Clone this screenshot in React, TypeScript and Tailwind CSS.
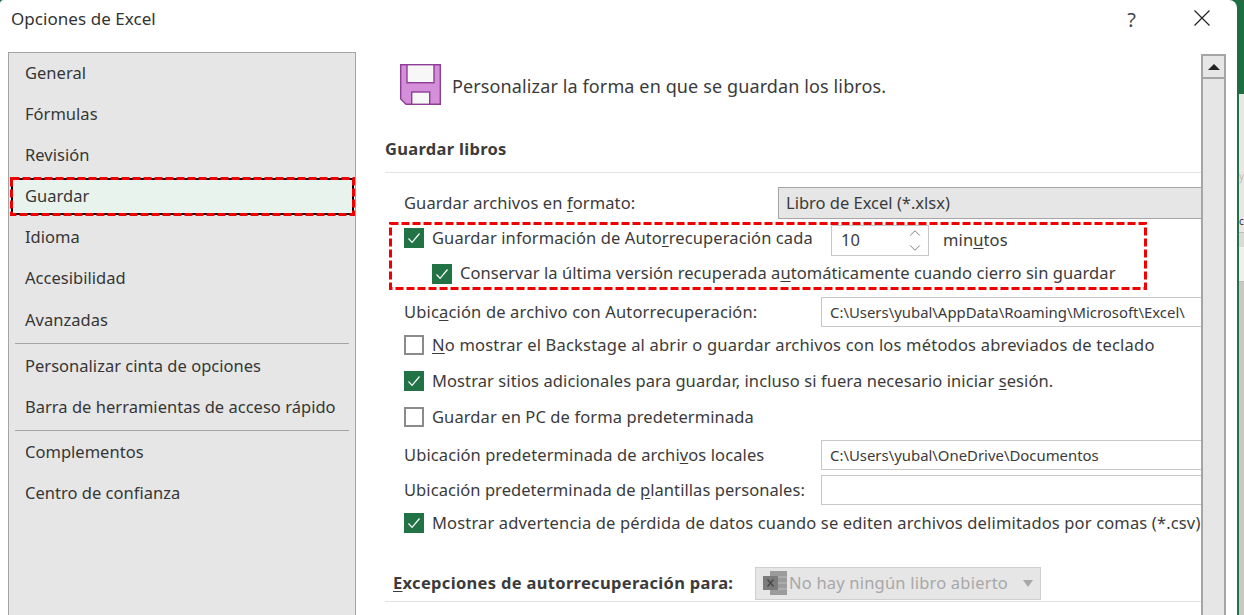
import { ChevronUp, ChevronDown } from "lucide-react";

const font = "font-['Noto_Sans','Open_Sans',sans-serif]";

const navTop = ["General", "Fórmulas", "Revisión"];
const navMid = ["Idioma", "Accesibilidad"];

function U({ children }: { children: string }) {
  return <span className="underline underline-offset-2">{children}</span>;
}

function Check({ on }: { on?: boolean }) {
  return (
    <span
      className={
        on
          ? "flex h-5 w-5 shrink-0 items-center justify-center bg-[#217346]"
          : "flex h-5 w-5 shrink-0 items-center justify-center border-2 border-[#8a8a8a] bg-white"
      }
    >
      {on && (
        <svg width="14" height="14" viewBox="0 0 14 14" fill="none" stroke="#fff" strokeWidth="1.2">
          <path d="M1.5 7.5l3.6 3.8L12.5 2.5" />
        </svg>
      )}
    </span>
  );
}

function NavItem({ label, tall }: { label: string; tall?: boolean }) {
  return (
    <div className={tall ? "flex h-[42px] items-center pl-4 text-[#363636]" : "flex h-[41px] items-center pl-4 text-[#363636]"}>
      {label}
    </div>
  );
}

// hand-drawn red dashed annotation that sits over the dialog
function DashedMark({ w, h, under }: { w: number; h: number; under?: boolean }) {
  return (
    <svg width={w} height={h} className="pointer-events-none absolute left-0 top-0" fill="none" strokeWidth="3">
      {under && <rect x="2" y="2" width={w - 4} height={h - 4} stroke="#000" strokeWidth="2" />}
      <rect x="1.5" y="1.5" width={w - 3} height={h - 3} stroke="#f00000" strokeDasharray="8 3" />
    </svg>
  );
}

function FloppyIcon() {
  return (
    <svg width="41" height="41" viewBox="0 0 41 41" className="shrink-0">
      <path d="M.7.7H40.3V40.3H6L.7 35Z" fill="#d48fd8" stroke="#8e3e96" strokeWidth="1.4" />
      <rect x="7" y=".7" width="27" height="18" fill="#f7f7f7" stroke="#8e3e96" strokeWidth="1.4" />
      <rect x="11.7" y="28" width="18" height="12.3" fill="#f7f7f7" stroke="#8e3e96" strokeWidth="1.4" />
    </svg>
  );
}

function ExcelGhost() {
  return (
    <svg width="26" height="26" viewBox="0 0 26 26" className="shrink-0">
      <rect x="7" y="0" width="17" height="24" fill="#9b9b9b" />
      <path d="M15 6h9M15 12h9M15 18h9" stroke="#bdbdbd" strokeWidth="1" />
      <rect x="0" y="5" width="15" height="14" fill="#7c7c7c" />
      <path d="M4.5 8.5l6 7M10.5 8.5l-6 7" stroke="#444" strokeWidth="1.2" />
    </svg>
  );
}

export default function App() {
  return (
    <div className={`${font} flex h-[615px] w-[1244px] overflow-hidden bg-[#1f6e43] text-[16.5px] leading-none tracking-[0.1px] text-[#3b3b3b]`}>
      <div className="h-full w-[1237px] shrink-0 rounded-tl-[4px] rounded-tr-[8px] bg-white">
        <div className="flex h-[52px] items-start justify-between pl-[11px] pr-[27px] pt-[10px]">
          <span className="text-[17px] tracking-[0.05px] text-[#333]">Opciones de Excel</span>
          <div className="flex items-start gap-[58px]">
            <span className="text-[20px] text-[#444]">?</span>
            <svg width="16" height="16" viewBox="0 0 16 16" fill="none" stroke="#222" strokeWidth="1.2">
              <path d="M.5.5l15 15M15.5.5l-15 15" />
            </svg>
          </div>
        </div>

        <div className="flex h-[563px]">
          <aside className="ml-2 w-[348px] shrink-0 border border-b-0 border-[#a5a5a5] bg-[#e6e6e6] tracking-[0.02px]">
            {navTop.map((n) => (
              <NavItem key={n} label={n} />
            ))}
            <div className="relative my-[1px] ml-[1px] flex h-[39px] items-center bg-[#e9f3ee] pl-[15px] text-[#363636]">
              Guardar
              <DashedMark w={345} h={39} under />
            </div>
            {navMid.map((n) => (
              <NavItem key={n} label={n} />
            ))}
            <NavItem label="Avanzadas" tall />
            <div className="mx-[6px] mt-[2px] border-t border-[#a5a5a5]" />
            <div className="mt-[1px]">
              <NavItem label="Personalizar cinta de opciones" tall />
              <NavItem label="Barra de herramientas de acceso rápido" />
            </div>
            <div className="mx-[6px] mt-[2px] border-t border-[#a5a5a5]" />
            <div className="mt-[1px]">
              <NavItem label="Complementos" />
              <NavItem label="Centro de confianza" />
            </div>
          </aside>

          <main className="ml-[29px] w-[816px] shrink-0 overflow-hidden">
            <div className="mt-[12px] flex h-[41px] items-center gap-[11px] pl-[15px]">
              <FloppyIcon />
              <span className="mt-[3px] text-[18px] tracking-[0.12px]">Personalizar la forma en que se guardan los libros.</span>
            </div>

            <div className="mt-[32px] flex h-[24px] items-center font-bold tracking-[0.3px]">Guardar libros</div>
            <div className="mt-[11px] border-t border-[#e3e3e3]" />

            <div className="mt-[14px] flex h-[32px] items-center pl-[19px]">
              <span className="w-[374px]">
                Guardar archivos en <U>f</U>ormato:
              </span>
              <div className="flex h-[32px] flex-1 items-center border border-r-0 border-[#a5a5a5] bg-[#e6e6e6] pl-[7px] tracking-normal">
                Libro de Excel (*.xlsx)
              </div>
            </div>

            <div className="relative mt-[3px] ml-[4px] h-[68px] w-[758px] pl-[15px] pt-[3px]">
              <div className="flex h-[31px] items-center">
                <div className="mb-[5px] flex items-center gap-2">
                  <Check on />
                  <span className="w-[399px]">
                    Guardar información de Auto<U>r</U>recuperación cada
                  </span>
                </div>
                <div className="flex h-[31px] w-[98px] items-center justify-between border border-[#c8c8c8] pl-[9px] pr-[4px]">
                  <span>10</span>
                  <span className="flex flex-col items-center -space-y-[3px] text-[#555]">
                    <ChevronUp className="h-[18px] w-[18px]" strokeWidth={1} />
                    <ChevronDown className="h-[18px] w-[18px]" strokeWidth={1} />
                  </span>
                </div>
                <span className="ml-[14px]">
                  min<U>u</U>tos
                </span>
              </div>
              <div className="mt-[2px] flex h-[31px] items-center gap-2 pl-[28px] tracking-[0.06px]">
                <Check on />
                <span>
                  Conservar la última versión recuperada a<U>u</U>tomáticamente cuando cierro sin guardar
                </span>
              </div>
              <DashedMark w={758} h={68} />
            </div>

            <div className="mt-[7px] flex h-[30px] items-center pl-[19px]">
              <span className="w-[417px] tracking-[0.16px]">
                Ubic<U>a</U>ción de archivo con Autorrecuperación:
              </span>
              <div className="flex h-[30px] flex-1 items-center border border-r-0 border-[#c8c8c8] pl-2 text-[14.9px] tracking-normal">
                C:\Users\yubal\AppData\Roaming\Microsoft\Excel\
              </div>
            </div>

            <div className="mt-[2px] flex h-[32px] items-center gap-2 pl-[19px] tracking-[0.2px]">
              <Check />
              <span>
                <U>N</U>o mostrar el Backstage al abrir o guardar archivos con los métodos abreviados de teclado
              </span>
            </div>
            <div className="mt-[4px] flex h-[32px] items-center gap-2 pl-[19px] tracking-[0.085px]">
              <Check on />
              <span>
                Mostrar sitios adicionales para guardar, incluso si fuera necesario iniciar <U>s</U>esión.
              </span>
            </div>
            <div className="mt-[4px] flex h-[32px] items-center gap-2 pl-[19px]">
              <Check />
              <span>Guardar en PC de forma predeterminada</span>
            </div>

            <div className="mt-[7px] flex h-[30px] items-center pl-[19px]">
              <span className="w-[417px]">
                Ubicación predeterminada de archi<U>v</U>os locales
              </span>
              <div className="flex h-[30px] flex-1 items-center border border-r-0 border-[#c8c8c8] pl-2 text-[14.9px] tracking-normal">
                C:\Users\yubal\OneDrive\Documentos
              </div>
            </div>
            <div className="mt-[5px] flex h-[30px] items-center pl-[19px]">
              <span className="w-[417px] tracking-[0.06px]">
                Ubicación predeterminada de <U>p</U>lantillas personales:
              </span>
              <div className="h-[30px] flex-1 border border-r-0 border-[#c8c8c8]" />
            </div>

            <div className="mt-[2px] flex h-[32px] items-center gap-2 pl-[19px] tracking-[0.15px]">
              <Check on />
              <span className="whitespace-nowrap">
                Mostrar advertencia de pérdida de datos cuando se editen archivos delimitados por comas (*.csv)
              </span>
            </div>

            <div className="mt-[28px] flex h-[33px] items-center pl-[8px]">
              <span className="w-[362px] font-bold tracking-[0.32px]">
                <U>E</U>xcepciones de autorrecuperación para:
              </span>
              <div className="flex h-[33px] w-[286px] items-center justify-between border border-[#cfcfcf] bg-[#e6e6e6] pl-[7px] pr-[7px] text-[#a8a8a8] tracking-[0.2px]">
                <span className="flex items-center">
                  <ExcelGhost />
                  No hay ningún libro abierto
                </span>
                <span className="h-0 w-0 border-x-[5px] border-t-[7px] border-x-transparent border-t-[#a8a8a8]" />
              </div>
            </div>
            <div className="mt-[1px] border-t border-[#e3e3e3]" />
          </main>

          <div className="mt-[2px] h-full w-[25px] shrink-0 border-x-2 border-t-2 border-[#a5a5a5] bg-[#e6e6e6]">
            <div className="flex h-[23px] items-center justify-center border-b-2 border-[#a5a5a5]">
              <span className="h-0 w-0 border-x-[6px] border-b-[6px] border-x-transparent border-b-[#222]" />
            </div>
          </div>
        </div>
      </div>

      {/* excel window peeking out behind the dialog */}
      <div className="flex-1 pt-[94px]">
        <div className="flex h-full flex-col border-l-2 border-[#217346]">
          <div className="flex h-[138px] flex-col justify-between bg-[#e9e7e6] pb-[6px] pt-[77px] text-[10px] tracking-normal text-[#bbb]">
            <span>y</span>
            <span className="text-[#333]">c</span>
          </div>
          <div className="h-[15px] border-t border-[#bdbdbd] bg-[#dcdad9]" />
          <div className="h-[34px] bg-[#f0efee]" />
          <div className="flex-1 border-t border-[#bdbdbd] bg-[#cbc7c5]" />
        </div>
      </div>
    </div>
  );
}
